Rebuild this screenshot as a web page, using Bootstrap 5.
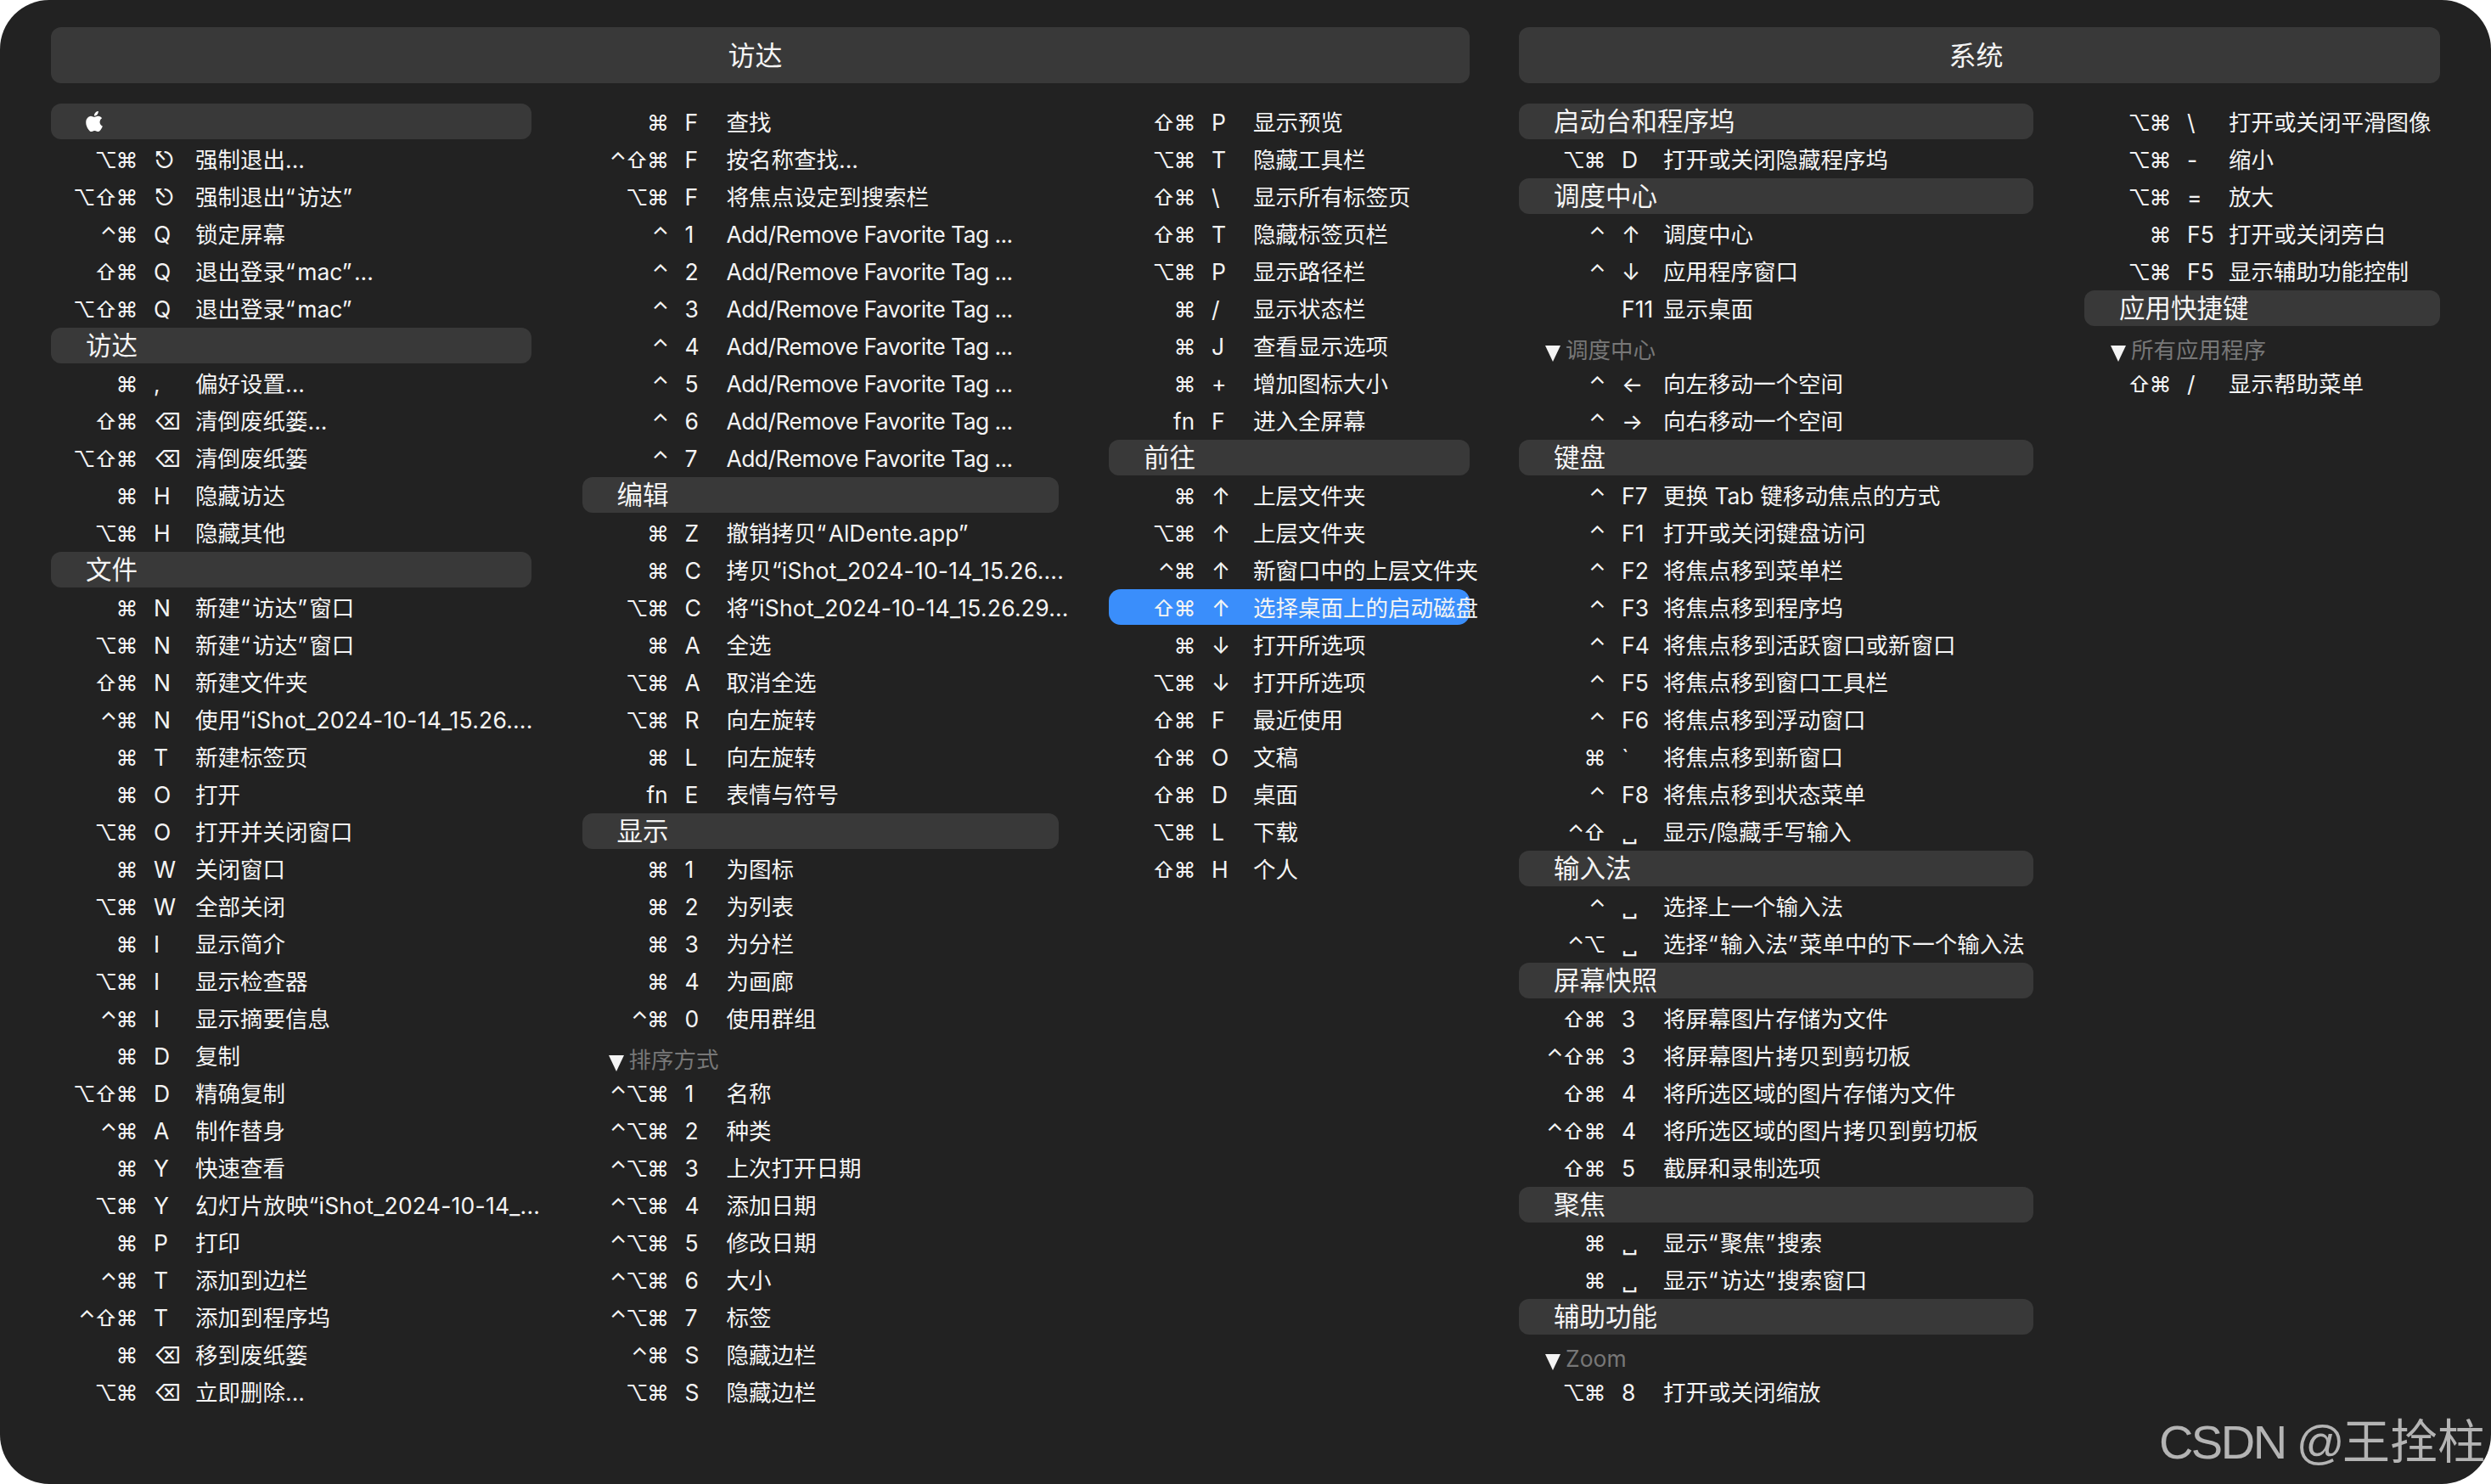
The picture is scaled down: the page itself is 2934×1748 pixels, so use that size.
<!DOCTYPE html>
<html lang="zh-CN">
<head>
<meta charset="utf-8">
<title>CheatSheet</title>
<link href="https://cdn.jsdelivr.net/npm/bootstrap@5.3.0/dist/css/bootstrap.min.css" rel="stylesheet">
<style>
html,body{height:100%;background:#fff;}
body{margin:0;font-family:Inter,"Noto Sans CJK SC","DejaVu Sans",sans-serif;color:#f4f4f4;}
.kb-sheet{height:1748px;width:2934px;background:#222;border-radius:58px;padding:32px 60px 0;position:relative;overflow:hidden;}
.kb-sec-a{width:1671px;}
.kb-sec-b{width:1085px;}
.kb-title{height:66px;background:#393939;border-radius:12px;margin-bottom:24px;font-size:32px;line-height:68px;text-align:center;padding-right:8px;}
.kb-sec-a .kb-title{padding-right:12px;}
.w1{width:566px;}.w2{width:561px;}.w3{width:425px;}.w4{width:606px;}.w5{width:419px;}
.h{height:42px;margin-bottom:2px;background:#393939;border-radius:12px;font-size:30.5px;line-height:42px;padding-left:41px;white-space:nowrap;}
.r{height:44px;font-size:26.5px;line-height:45px;white-space:nowrap;display:flex;}
.r.on{background:#3a8efb;border-radius:14px;height:42px;margin-bottom:2px;}
.m{width:101px;flex:none;text-align:right;font-size:26px;letter-spacing:-1.5px;}
.fn{letter-spacing:0;}
.k{width:49px;flex:none;margin-left:20px;}
.tag{letter-spacing:-.58px;}
.sn{letter-spacing:.22px;}
.q{padding-right:2.5px;}
.g{height:44px;font-size:26.5px;line-height:52px;color:#777;padding-left:55px;position:relative;white-space:nowrap;}
.g::before{content:"";position:absolute;left:31px;top:21px;border-left:9.5px solid transparent;border-right:9.5px solid transparent;border-top:19px solid #f4f4f4;}
.kb-mark{position:absolute;right:7px;bottom:13px;font-family:"Liberation Sans","Noto Sans CJK SC",sans-serif;font-size:56px;line-height:72px;color:#b4b4b4;}
.kb-mark span{letter-spacing:-2.5px;}
.kb-apple{width:24px;height:24px;fill:#fff;margin-left:-2px;}
</style>
</head>
<body>
<div class="kb-sheet d-flex gap-5 justify-content-between">
<section class="kb-sec-a">
<div class="kb-title">访达</div>
<div class="d-flex justify-content-between">
<div class="w1">
<div class="h d-flex align-items-center"><svg class="kb-apple" viewBox="0 0 16 16"><path d="M11.182.008C11.148-.03 9.923.023 8.857 1.18c-1.066 1.156-.902 2.482-.878 2.516.024.034 1.52.087 2.475-1.258.955-1.345.762-2.391.728-2.43Zm3.314 11.733c-.048-.096-2.325-1.234-2.113-3.422.212-2.189 1.675-2.789 1.698-2.854.023-.065-.597-.79-1.254-1.157a3.692 3.692 0 0 0-1.563-.434c-.108-.003-.483-.095-1.254.116-.508.139-1.653.589-1.968.607-.316.018-1.256-.522-2.267-.665-.647-.125-1.333.131-1.824.328-.49.196-1.422.754-2.074 2.237-.652 1.482-.311 3.83-.067 4.56.244.729.625 1.924 1.273 2.796.576.984 1.34 1.667 1.659 1.899.319.232 1.219.386 1.843.067.502-.308 1.408-.485 1.766-.472.357.013 1.061.154 1.782.539.571.197 1.111.115 1.652-.105.541-.221 1.324-1.059 2.238-2.758.347-.79.505-1.217.473-1.282Z"/></svg></div>
<div class="r"><span class="m">⌥⌘</span><span class="k">⎋</span><span>强制退出...</span></div>
<div class="r"><span class="m">⌥⇧⌘</span><span class="k">⎋</span><span>强制退出<span class="q">“</span>访达<span class="q">”</span></span></div>
<div class="r"><span class="m">⌃⌘</span><span class="k">Q</span><span>锁定屏幕</span></div>
<div class="r"><span class="m">⇧⌘</span><span class="k">Q</span><span>退出登录<span class="q">“</span>mac<span class="q">”</span>...</span></div>
<div class="r"><span class="m">⌥⇧⌘</span><span class="k">Q</span><span>退出登录<span class="q">“</span>mac<span class="q">”</span></span></div>
<div class="h">访达</div>
<div class="r"><span class="m">⌘</span><span class="k">,</span><span>偏好设置...</span></div>
<div class="r"><span class="m">⇧⌘</span><span class="k">⌫</span><span>清倒废纸篓...</span></div>
<div class="r"><span class="m">⌥⇧⌘</span><span class="k">⌫</span><span>清倒废纸篓</span></div>
<div class="r"><span class="m">⌘</span><span class="k">H</span><span>隐藏访达</span></div>
<div class="r"><span class="m">⌥⌘</span><span class="k">H</span><span>隐藏其他</span></div>
<div class="h">文件</div>
<div class="r"><span class="m">⌘</span><span class="k">N</span><span>新建<span class="q">“</span>访达<span class="q">”</span>窗口</span></div>
<div class="r"><span class="m">⌥⌘</span><span class="k">N</span><span>新建<span class="q">“</span>访达<span class="q">”</span>窗口</span></div>
<div class="r"><span class="m">⇧⌘</span><span class="k">N</span><span>新建文件夹</span></div>
<div class="r"><span class="m">⌃⌘</span><span class="k">N</span><span class="sn">使用“iShot_2024-10-14_15.26....</span></div>
<div class="r"><span class="m">⌘</span><span class="k">T</span><span>新建标签页</span></div>
<div class="r"><span class="m">⌘</span><span class="k">O</span><span>打开</span></div>
<div class="r"><span class="m">⌥⌘</span><span class="k">O</span><span>打开并关闭窗口</span></div>
<div class="r"><span class="m">⌘</span><span class="k">W</span><span>关闭窗口</span></div>
<div class="r"><span class="m">⌥⌘</span><span class="k">W</span><span>全部关闭</span></div>
<div class="r"><span class="m">⌘</span><span class="k">I</span><span>显示简介</span></div>
<div class="r"><span class="m">⌥⌘</span><span class="k">I</span><span>显示检查器</span></div>
<div class="r"><span class="m">⌃⌘</span><span class="k">I</span><span>显示摘要信息</span></div>
<div class="r"><span class="m">⌘</span><span class="k">D</span><span>复制</span></div>
<div class="r"><span class="m">⌥⇧⌘</span><span class="k">D</span><span>精确复制</span></div>
<div class="r"><span class="m">⌃⌘</span><span class="k">A</span><span>制作替身</span></div>
<div class="r"><span class="m">⌘</span><span class="k">Y</span><span>快速查看</span></div>
<div class="r"><span class="m">⌥⌘</span><span class="k">Y</span><span class="sn">幻灯片放映“iShot_2024-10-14_...</span></div>
<div class="r"><span class="m">⌘</span><span class="k">P</span><span>打印</span></div>
<div class="r"><span class="m">⌃⌘</span><span class="k">T</span><span>添加到边栏</span></div>
<div class="r"><span class="m">⌃⇧⌘</span><span class="k">T</span><span>添加到程序坞</span></div>
<div class="r"><span class="m">⌘</span><span class="k">⌫</span><span>移到废纸篓</span></div>
<div class="r"><span class="m">⌥⌘</span><span class="k">⌫</span><span>立即删除...</span></div>
</div>
<div class="w2">
<div class="r"><span class="m">⌘</span><span class="k">F</span><span>查找</span></div>
<div class="r"><span class="m">⌃⇧⌘</span><span class="k">F</span><span>按名称查找...</span></div>
<div class="r"><span class="m">⌥⌘</span><span class="k">F</span><span>将焦点设定到搜索栏</span></div>
<div class="r"><span class="m">⌃</span><span class="k">1</span><span class="tag">Add/Remove Favorite Tag ...</span></div>
<div class="r"><span class="m">⌃</span><span class="k">2</span><span class="tag">Add/Remove Favorite Tag ...</span></div>
<div class="r"><span class="m">⌃</span><span class="k">3</span><span class="tag">Add/Remove Favorite Tag ...</span></div>
<div class="r"><span class="m">⌃</span><span class="k">4</span><span class="tag">Add/Remove Favorite Tag ...</span></div>
<div class="r"><span class="m">⌃</span><span class="k">5</span><span class="tag">Add/Remove Favorite Tag ...</span></div>
<div class="r"><span class="m">⌃</span><span class="k">6</span><span class="tag">Add/Remove Favorite Tag ...</span></div>
<div class="r"><span class="m">⌃</span><span class="k">7</span><span class="tag">Add/Remove Favorite Tag ...</span></div>
<div class="h">编辑</div>
<div class="r"><span class="m">⌘</span><span class="k">Z</span><span>撤销拷贝<span class="q">“</span>AlDente.app<span class="q">”</span></span></div>
<div class="r"><span class="m">⌘</span><span class="k">C</span><span class="sn">拷贝“iShot_2024-10-14_15.26....</span></div>
<div class="r"><span class="m">⌥⌘</span><span class="k">C</span><span class="sn">将“iShot_2024-10-14_15.26.29...</span></div>
<div class="r"><span class="m">⌘</span><span class="k">A</span><span>全选</span></div>
<div class="r"><span class="m">⌥⌘</span><span class="k">A</span><span>取消全选</span></div>
<div class="r"><span class="m">⌥⌘</span><span class="k">R</span><span>向左旋转</span></div>
<div class="r"><span class="m">⌘</span><span class="k">L</span><span>向左旋转</span></div>
<div class="r"><span class="m fn">fn</span><span class="k">E</span><span>表情与符号</span></div>
<div class="h">显示</div>
<div class="r"><span class="m">⌘</span><span class="k">1</span><span>为图标</span></div>
<div class="r"><span class="m">⌘</span><span class="k">2</span><span>为列表</span></div>
<div class="r"><span class="m">⌘</span><span class="k">3</span><span>为分栏</span></div>
<div class="r"><span class="m">⌘</span><span class="k">4</span><span>为画廊</span></div>
<div class="r"><span class="m">⌃⌘</span><span class="k">0</span><span>使用群组</span></div>
<div class="g">排序方式</div>
<div class="r"><span class="m">⌃⌥⌘</span><span class="k">1</span><span>名称</span></div>
<div class="r"><span class="m">⌃⌥⌘</span><span class="k">2</span><span>种类</span></div>
<div class="r"><span class="m">⌃⌥⌘</span><span class="k">3</span><span>上次打开日期</span></div>
<div class="r"><span class="m">⌃⌥⌘</span><span class="k">4</span><span>添加日期</span></div>
<div class="r"><span class="m">⌃⌥⌘</span><span class="k">5</span><span>修改日期</span></div>
<div class="r"><span class="m">⌃⌥⌘</span><span class="k">6</span><span>大小</span></div>
<div class="r"><span class="m">⌃⌥⌘</span><span class="k">7</span><span>标签</span></div>
<div class="r"><span class="m">⌃⌘</span><span class="k">S</span><span>隐藏边栏</span></div>
<div class="r"><span class="m">⌥⌘</span><span class="k">S</span><span>隐藏边栏</span></div>
</div>
<div class="w3">
<div class="r"><span class="m">⇧⌘</span><span class="k">P</span><span>显示预览</span></div>
<div class="r"><span class="m">⌥⌘</span><span class="k">T</span><span>隐藏工具栏</span></div>
<div class="r"><span class="m">⇧⌘</span><span class="k">\</span><span>显示所有标签页</span></div>
<div class="r"><span class="m">⇧⌘</span><span class="k">T</span><span>隐藏标签页栏</span></div>
<div class="r"><span class="m">⌥⌘</span><span class="k">P</span><span>显示路径栏</span></div>
<div class="r"><span class="m">⌘</span><span class="k">/</span><span>显示状态栏</span></div>
<div class="r"><span class="m">⌘</span><span class="k">J</span><span>查看显示选项</span></div>
<div class="r"><span class="m">⌘</span><span class="k">+</span><span>增加图标大小</span></div>
<div class="r"><span class="m fn">fn</span><span class="k">F</span><span>进入全屏幕</span></div>
<div class="h">前往</div>
<div class="r"><span class="m">⌘</span><span class="k">↑</span><span>上层文件夹</span></div>
<div class="r"><span class="m">⌥⌘</span><span class="k">↑</span><span>上层文件夹</span></div>
<div class="r"><span class="m">⌃⌘</span><span class="k">↑</span><span>新窗口中的上层文件夹</span></div>
<div class="r on"><span class="m">⇧⌘</span><span class="k">↑</span><span>选择桌面上的启动磁盘</span></div>
<div class="r"><span class="m">⌘</span><span class="k">↓</span><span>打开所选项</span></div>
<div class="r"><span class="m">⌥⌘</span><span class="k">↓</span><span>打开所选项</span></div>
<div class="r"><span class="m">⇧⌘</span><span class="k">F</span><span>最近使用</span></div>
<div class="r"><span class="m">⇧⌘</span><span class="k">O</span><span>文稿</span></div>
<div class="r"><span class="m">⇧⌘</span><span class="k">D</span><span>桌面</span></div>
<div class="r"><span class="m">⌥⌘</span><span class="k">L</span><span>下载</span></div>
<div class="r"><span class="m">⇧⌘</span><span class="k">H</span><span>个人</span></div>
</div>
</div>
</section>
<section class="kb-sec-b">
<div class="kb-title">系统</div>
<div class="d-flex justify-content-between">
<div class="w4">
<div class="h">启动台和程序坞</div>
<div class="r"><span class="m">⌥⌘</span><span class="k">D</span><span>打开或关闭隐藏程序坞</span></div>
<div class="h">调度中心</div>
<div class="r"><span class="m">⌃</span><span class="k">↑</span><span>调度中心</span></div>
<div class="r"><span class="m">⌃</span><span class="k">↓</span><span>应用程序窗口</span></div>
<div class="r"><span class="m"></span><span class="k">F11</span><span>显示桌面</span></div>
<div class="g">调度中心</div>
<div class="r"><span class="m">⌃</span><span class="k">←</span><span>向左移动一个空间</span></div>
<div class="r"><span class="m">⌃</span><span class="k">→</span><span>向右移动一个空间</span></div>
<div class="h">键盘</div>
<div class="r"><span class="m">⌃</span><span class="k">F7</span><span>更换 Tab 键移动焦点的方式</span></div>
<div class="r"><span class="m">⌃</span><span class="k">F1</span><span>打开或关闭键盘访问</span></div>
<div class="r"><span class="m">⌃</span><span class="k">F2</span><span>将焦点移到菜单栏</span></div>
<div class="r"><span class="m">⌃</span><span class="k">F3</span><span>将焦点移到程序坞</span></div>
<div class="r"><span class="m">⌃</span><span class="k">F4</span><span>将焦点移到活跃窗口或新窗口</span></div>
<div class="r"><span class="m">⌃</span><span class="k">F5</span><span>将焦点移到窗口工具栏</span></div>
<div class="r"><span class="m">⌃</span><span class="k">F6</span><span>将焦点移到浮动窗口</span></div>
<div class="r"><span class="m">⌘</span><span class="k">`</span><span>将焦点移到新窗口</span></div>
<div class="r"><span class="m">⌃</span><span class="k">F8</span><span>将焦点移到状态菜单</span></div>
<div class="r"><span class="m">⌃⇧</span><span class="k">␣</span><span>显示/隐藏手写输入</span></div>
<div class="h">输入法</div>
<div class="r"><span class="m">⌃</span><span class="k">␣</span><span>选择上一个输入法</span></div>
<div class="r"><span class="m">⌃⌥</span><span class="k">␣</span><span>选择<span class="q">“</span>输入法<span class="q">”</span>菜单中的下一个输入法</span></div>
<div class="h">屏幕快照</div>
<div class="r"><span class="m">⇧⌘</span><span class="k">3</span><span>将屏幕图片存储为文件</span></div>
<div class="r"><span class="m">⌃⇧⌘</span><span class="k">3</span><span>将屏幕图片拷贝到剪切板</span></div>
<div class="r"><span class="m">⇧⌘</span><span class="k">4</span><span>将所选区域的图片存储为文件</span></div>
<div class="r"><span class="m">⌃⇧⌘</span><span class="k">4</span><span>将所选区域的图片拷贝到剪切板</span></div>
<div class="r"><span class="m">⇧⌘</span><span class="k">5</span><span>截屏和录制选项</span></div>
<div class="h">聚焦</div>
<div class="r"><span class="m">⌘</span><span class="k">␣</span><span>显示<span class="q">“</span>聚焦<span class="q">”</span>搜索</span></div>
<div class="r"><span class="m">⌘</span><span class="k">␣</span><span>显示<span class="q">“</span>访达<span class="q">”</span>搜索窗口</span></div>
<div class="h">辅助功能</div>
<div class="g">Zoom</div>
<div class="r"><span class="m">⌥⌘</span><span class="k">8</span><span>打开或关闭缩放</span></div>
</div>
<div class="w5">
<div class="r"><span class="m">⌥⌘</span><span class="k">\</span><span>打开或关闭平滑图像</span></div>
<div class="r"><span class="m">⌥⌘</span><span class="k">-</span><span>缩小</span></div>
<div class="r"><span class="m">⌥⌘</span><span class="k">=</span><span>放大</span></div>
<div class="r"><span class="m">⌘</span><span class="k">F5</span><span>打开或关闭旁白</span></div>
<div class="r"><span class="m">⌥⌘</span><span class="k">F5</span><span>显示辅助功能控制</span></div>
<div class="h">应用快捷键</div>
<div class="g">所有应用程序</div>
<div class="r"><span class="m">⇧⌘</span><span class="k">/</span><span>显示帮助菜单</span></div>
</div>
</div>
</section>
<div class="kb-mark"><span>CSDN @</span>王拴柱</div>
</div>
<script src="https://cdn.jsdelivr.net/npm/bootstrap@5.3.0/dist/js/bootstrap.bundle.min.js"></script>
</body>
</html>
